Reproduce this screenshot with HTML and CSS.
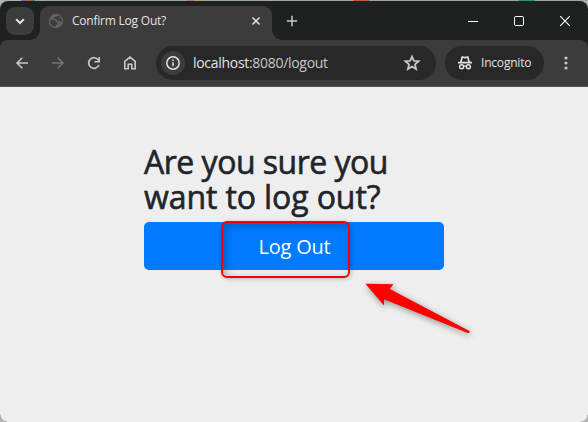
FILE: index.html
```html
<!DOCTYPE html>
<html lang="en">
<head>
<meta charset="utf-8">
<title>Confirm Log Out?</title>
<link rel="stylesheet" href="styles.css">
</head>
<body>
<div class="backdrop"></div>
<div class="window">
  <header class="tabstrip">
    <button class="tab-search" aria-label="Search tabs"><svg width="28" height="28" viewBox="0 0 28 28"><path d="M10.2 12.2l3.8 3.8 3.8-3.8" fill="none" stroke="#e3e3e3" stroke-width="2"/></svg></button>
    <div class="tab">
      <svg class="globe" width="16" height="16" viewBox="0 0 16 16"><circle cx="8" cy="8" r="7.2" fill="#5f6368"/><path d="M2.1 6.8h3.4c1.5 0 2.4 1 2.3 2.3h1.7v2.3H7.8v2.3c-3.2 0-5.6-2.5-5.7-5.7zM9.9 2.5c2.4.9 4 3 4 5.5l-.2 1.4c-.7-.3-1-.9-1.5-1.5h-2c-1.2 0-1.7-.7-1.7-1.8H6.2V4.8c0-.8.6-1.2 1.5-1.2h1.5z" fill="#3c3c3c"/></svg>
      <span class="tab-title">Confirm Log Out?</span>
      <svg class="tab-close" width="10" height="10" viewBox="0 0 10 10"><path d="M1.5 1.5l7 7m0-7l-7 7" stroke="#e3e3e3" stroke-width="1.5"/></svg>
    </div>
    <svg class="new-tab" width="12" height="12" viewBox="0 0 12 12"><path d="M6 .8v10.4M.8 6h10.4" stroke="#c7c7c7" stroke-width="1.5"/></svg>
    <div class="controls">
      <svg width="12" height="12" viewBox="0 0 12 12"><path d="M1 6.5h10" stroke="#fff"/></svg>
      <svg width="12" height="12" viewBox="0 0 12 12"><rect x="1.5" y="1.5" width="9" height="9" rx="1.3" fill="none" stroke="#fff"/></svg>
      <svg width="12" height="12" viewBox="0 0 12 12"><path d="M1.2 1.2l9.6 9.6m0-9.6l-9.6 9.6" stroke="#fff" stroke-width="1.1"/></svg>
    </div>
  </header>
  <nav class="toolbar">
    <div class="nav-icons">
      <svg width="16" height="16" viewBox="0 0 16 16"><path d="M14 8H3m5.3-5.3L3 8l5.3 5.3" fill="none" stroke="#c7c7c7" stroke-width="1.6"/></svg>
      <svg width="16" height="16" viewBox="0 0 16 16"><path d="M2 8h11M7.7 2.7L13 8l-5.3 5.3" fill="none" stroke="#757575" stroke-width="1.6"/></svg>
      <svg width="16" height="16" viewBox="0 0 16 16"><path d="M12.9 10a5.300 5.300 0 1 1-.4-4.800" fill="none" stroke="#c7c7c7" stroke-width="1.7"/><path d="M13.200 2v4.700H8.500" fill="none" stroke="#c7c7c7" stroke-width="1.600"/></svg>
      <svg width="16" height="16" viewBox="0 0 16 16"><path d="M2.800 6.300L8 2.100l5.200 4.200v7.500H9.800V9.300H6.200v4.500H2.800z" fill="none" stroke="#c7c7c7" stroke-width="1.600"/></svg>
    </div>
    <div class="address">
      <span class="site-info"><svg width="16" height="16" viewBox="0 0 16 16"><circle cx="8" cy="8" r="6.200" fill="none" stroke="#e3e3e3" stroke-width="1.500"/><path d="M8 7.200v4M8 4.500v1.500" stroke="#e3e3e3" stroke-width="1.500"/></svg></span>
      <span class="url">localhost<span class="dim">:8080/logout</span></span>
      <svg class="star" width="18" height="18" viewBox="0 0 18 18"><path d="M9 2.500l1.900 4.300 4.700.4-3.600 3.200 1.100 4.700L9 12.600l-4.100 2.500L6 10.400 2.400 7.200l4.700-.4z" fill="none" stroke="#c7c7c7" stroke-width="1.800"/></svg>
    </div>
    <div class="incognito">
      <svg width="16" height="16" viewBox="0 0 16 16"><path d="M1 7.600h14" stroke="#e3e3e3" stroke-width="1.600"/><path d="M3.800 7.200L5.200 2q1.200 0 2.800.6Q9.600 2 10.800 2l1.400 5.200" fill="none" stroke="#e3e3e3" stroke-width="1.700"/><circle cx="4.600" cy="11.700" r="2" fill="none" stroke="#e3e3e3" stroke-width="1.500"/><circle cx="11.400" cy="11.700" r="2" fill="none" stroke="#e3e3e3" stroke-width="1.500"/><path d="M6.500 11.300q1.500-.8 3 0" fill="none" stroke="#e3e3e3" stroke-width="1.300"/></svg>
      <span>Incognito</span>
    </div>
    <svg class="menu" width="4" height="16" viewBox="0 0 4 16"><g fill="#c7c7c7"><circle cx="2" cy="3" r="1.600"/><circle cx="2" cy="8" r="1.600"/><circle cx="2" cy="13" r="1.600"/></g></svg>
  </nav>
  <main class="page">
    <form class="logout">
      <h1><span class="line1">Are you sure you</span><br><span class="line2">want to log out?</span></h1>
      <button class="submit" type="button"><span>Log Out</span></button>
    </form>
  </main>
</div>
<div class="highlight"></div>
<svg class="arrow" width="130" height="75" viewBox="0 0 130 75"><path d="M10.300 8.700L38.500 9.200 34.800 14 114.500 56Q115 58.500 112 57.700L29 24.300V30.500z" fill="#f00"/></svg>
</body>
</html>
```
FILE: styles.css
```css
* { box-sizing: border-box; }
body {
  margin: 0;
  width: 588px;
  height: 422px;
  overflow: hidden;
  background: #b5b5b5;
  font-family: "Segoe UI", "Open Sans", "Noto Sans", sans-serif;
}
svg { display: block; flex: none; }
button { border: 0; padding: 0; font: inherit; }
.backdrop {
  height: 1px;
  background: linear-gradient(90deg, #a9b5ba 0 21px, #477ddb 21px 25px, #d84d46 25px 30px, #438968 30px 35px, #9ca4a4 35px 187px, #bd7887 187px 194px, #b8a068 194px 202px, #9ca4a4 202px 353px, #c45c3c 353px 369px, #9ca4a4 369px 519px, #2f985b 519px 535px, #9ca4a4 535px);
}
.window {
  height: 421px;
  display: flex;
  flex-direction: column;
  overflow: hidden;
  border-radius: 8px;
  background: #1f2120;
}
.tabstrip {
  height: 39px;
  display: flex;
  align-items: center;
  padding-left: 6px;
}
.tab-search {
  width: 28px;
  height: 28px;
  margin-right: 6px;
  border-radius: 9px;
  background: #3c3c3c;
}
.tab {
  position: relative;
  align-self: flex-end;
  width: 232px;
  height: 34px;
  display: flex;
  align-items: center;
  padding: 0 11px 4px 8px;
  border-radius: 9px 9px 0 0;
  background: #3c3c3c;
}
.tab::before, .tab::after {
  content: "";
  position: absolute;
  bottom: 0;
  width: 10px;
  height: 10px;
}
.tab::before { left: -10px; background: radial-gradient(circle at 0 0, transparent 9.5px, #3c3c3c 10px); }
.tab::after { right: -10px; background: radial-gradient(circle at 100% 0, transparent 9.5px, #3c3c3c 10px); }
.tab-title {
  margin-left: 8px;
  font-size: 12px;
  line-height: 16px;
  letter-spacing: -0.22px;
  white-space: nowrap;
  color: #e3e3e3;
}
.tab-close { margin-left: auto; }
.new-tab { margin-left: 14px; }
.controls {
  display: flex;
  gap: 34px;
  margin-left: auto;
  padding-right: 17px;
}
.toolbar {
  height: 47px;
  display: flex;
  align-items: center;
  padding: 0 20px 1px 14px;
  border-bottom: 1px solid #555;
  border-radius: 8px 8px 0 0;
  background: #3c3c3c;
}
.nav-icons { display: flex; gap: 20px; }
.address {
  width: 280px;
  height: 34px;
  display: flex;
  align-items: center;
  margin-left: 18px;
  padding: 0 15px 0 5px;
  border-radius: 17px;
  background: #282828;
}
.site-info {
  width: 24px;
  height: 24px;
  display: grid;
  place-items: center;
  border-radius: 50%;
  background: #3c3c3c;
}
.url {
  margin-left: 8px;
  font-size: 14px;
  line-height: 20px;
  letter-spacing: -0.3px;
  white-space: nowrap;
  color: #e3e3e3;
}
.dim { color: #c7c7c7; }
.star { margin-left: auto; }
.incognito {
  width: 99px;
  height: 34px;
  display: flex;
  align-items: center;
  gap: 8px;
  margin-left: 9px;
  padding-left: 12px;
  border-radius: 17px;
  background: #282828;
  color: #e3e3e3;
  font-size: 12px;
  line-height: 16px;
  letter-spacing: -0.2px;
}
.menu { margin-left: auto; }
.page {
  flex: 1;
  background: #eee;
}
.logout {
  width: 300px;
  margin: 0 auto;
  padding-top: 57px;
}
h1 {
  margin: 0 0 8px;
  height: 70px;
  font-size: 32px;
  font-weight: 500;
  line-height: 35px;
  white-space: nowrap;
  color: #212529;
  -webkit-text-stroke: 0.6px #212529;
}
.line1 { letter-spacing: -0.5px; }
.line2 { letter-spacing: -0.1px; }
.submit {
  display: block;
  width: 300px;
  height: 48px;
  border-radius: 5px;
  background: #007bff;
  color: #fff;
  font-size: 20px;
  line-height: 30px;
  letter-spacing: -0.2px;
}
.submit span {
  display: block;
  padding: 2px 0 0 1px;
}
.highlight {
  position: absolute;
  left: 221px;
  top: 221px;
  width: 129px;
  height: 57px;
  border: 2px solid #f2000c;
  border-radius: 6px;
  box-shadow: 1px 1px 5px rgba(0, 0, 0, .22), inset 3px 3px 9px rgba(0, 0, 0, .25);
}
.arrow {
  position: absolute;
  left: 355px;
  top: 275px;
  filter: drop-shadow(1px 2px 3px rgba(0, 0, 0, .4));
}
```
